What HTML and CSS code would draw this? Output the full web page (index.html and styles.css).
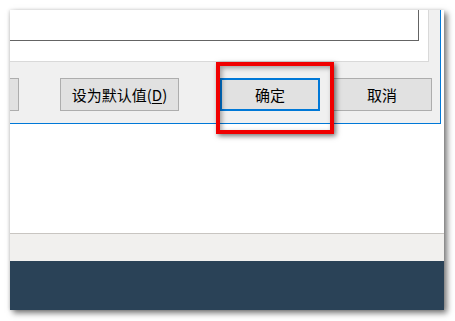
FILE: index.html
```html
<!DOCTYPE html>
<html lang="zh-CN">
<head>
<meta charset="utf-8">
<title>确定</title>
<link rel="stylesheet" href="styles.css">
</head>
<body>
<div class="shot">
  <div class="dialog">
    <div class="tab-row">
      <div class="tab-page">
        <div class="textbox"></div>
      </div>
    </div>
    <div class="button-row">
      <div class="btn btn-cut"></div>
      <div class="btn btn-default">设为默认值(<u>D</u>)</div>
      <div class="btn btn-ok">确定</div>
      <div class="btn btn-cancel">取消</div>
    </div>
  </div>
  <div class="blank"></div>
  <div class="statusbar"></div>
  <div class="navy"></div>
  <div class="highlight"></div>
</div>
</body>
</html>
```

FILE: styles.css
```css
html, body {
  margin: 0;
  padding: 0;
  background: #ffffff;
}

body {
  width: 455px;
  height: 321px;
  overflow: hidden;
  font-family: "Noto Sans CJK SC", "Noto Sans", sans-serif;
}

.shot {
  position: relative;
  margin: 10px 0 0 10px;
  width: 434px;
  height: 300px;
  background: #ffffff;
  display: flex;
  flex-direction: column;
  box-shadow: 3px 3px 6px rgba(0, 0, 0, 0.55), -1px 0 3px rgba(0, 0, 0, 0.12);
}

.dialog {
  width: 430px;
  height: 113px;
  background: #f0f0f0;
  border-right: 1px solid #0078d7;
  border-bottom: 1px solid #0078d7;
  display: flex;
  flex-direction: column;
  overflow: hidden;
}

.tab-row {
  height: 52px;
  display: flex;
}

.tab-page {
  width: 418px;
  height: 51px;
  background: #ffffff;
  border-right: 1px solid #d9d9d9;
  border-bottom: 1px solid #d9d9d9;
}

.textbox {
  width: 408px;
  height: 30px;
  background: #ffffff;
  border-right: 1px solid #646464;
  border-bottom: 1px solid #646464;
}

.button-row {
  display: flex;
  align-items: flex-start;
  padding-top: 16px;
}

.btn {
  box-sizing: border-box;
  height: 33px;
  background: #e1e1e1;
  border: 1px solid #adadad;
  display: flex;
  align-items: center;
  justify-content: center;
  font-size: 15px;
  color: #000000;
  white-space: nowrap;
}

.btn u {
  text-underline-offset: 2px;
}

.btn-cut {
  width: 100px;
  margin-left: -91px;
}

.btn-default {
  width: 119px;
  margin-left: 41px;
}

.btn-ok {
  width: 100px;
  margin-left: 41px;
  border: 2px solid #0078d7;
}

.btn-cancel {
  width: 100px;
  margin-left: 12px;
}

.blank {
  height: 109px;
  background: #ffffff;
}

.statusbar {
  height: 27px;
  background: #f1f0ee;
  border-top: 1px solid #c8c5c1;
}

.navy {
  flex: 1;
  background: #2a4257;
}

.highlight {
  position: absolute;
  left: 206px;
  top: 52px;
  width: 110px;
  height: 64px;
  border: 4px solid #f00000;
  box-shadow: 2px 2px 5px rgba(0, 0, 0, 0.55), inset 2px 2px 5px rgba(0, 0, 0, 0.35);
}
```
